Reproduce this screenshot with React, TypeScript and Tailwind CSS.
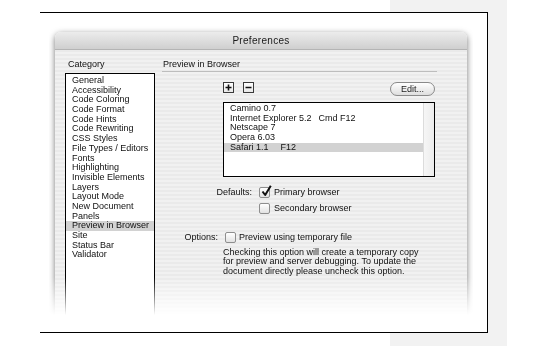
import React from 'react';

const categories = [
    'General',
    'Accessibility',
    'Code Coloring',
    'Code Format',
    'Code Hints',
    'Code Rewriting',
    'CSS Styles',
    'File Types / Editors',
    'Fonts',
    'Highlighting',
    'Invisible Elements',
    'Layers',
    'Layout Mode',
    'New Document',
    'Panels',
    'Preview in Browser',
    'Site',
    'Status Bar',
    'Validator',
];

const browsers = [
    { name: 'Camino 0.7' },
    { name: 'Internet Explorer 5.2', key: 'Cmd F12', gap: 'ml-[7px]' },
    { name: 'Netscape 7' },
    { name: 'Opera 6.03' },
    { name: 'Safari 1.1', key: 'F12', gap: 'ml-[12px]', selected: true },
];

const Checkbox: React.FC<{ checked?: boolean }> = ({ checked }) => (
    <span className="relative block w-[11px] h-[11px] shrink-0 rounded-[2px] border border-[#8e8e8e] bg-[linear-gradient(to_bottom,#ffffff,#e2e2e2)]">
        {checked && (
            <svg className="absolute -top-[3px] left-[1px]" width="11" height="12" viewBox="0 0 11 12">
                <path d="M1.5 6.5 L4.2 10 L9.8 0.8" stroke="#111" strokeWidth="2" fill="none" strokeLinejoin="round" />
            </svg>
        )}
    </span>
);

const SmallButton: React.FC<{ sign: '+' | '-' }> = ({ sign }) => (
    <span className="flex items-center justify-center w-[11px] h-[11px] border border-[#3a3a3a] bg-[linear-gradient(to_bottom,#ffffff,#e8e8e8)]">
        <svg width="7" height="7" viewBox="0 0 7 7">
            <path d="M0.5 3.5 H6.5" stroke="#111" strokeWidth="1.6" />
            {sign === '+' && <path d="M3.5 0.5 V6.5" stroke="#111" strokeWidth="1.6" />}
        </svg>
    </span>
);

export default function App() {
    return (
        <div className="w-[550px] h-[346px] overflow-hidden bg-[linear-gradient(to_right,#ffffff_390px,#f2f2f2_390px,#f2f2f2_507px,#ffffff_507px)] font-['Liberation_Sans',Arial,sans-serif] text-[#111] pt-[12px]">
            {/* Frame */}
            <div className="ml-[40px] w-[448px] h-[321px] border-t border-r border-b border-black bg-white">
                {/* Dialog, fading out at the bottom */}
                <div className="ml-[9px] mt-[13px] w-[424px] h-[292px] px-[6px] pt-[6px] [mask-image:linear-gradient(to_bottom,#000_86%,transparent_99%)]">
                    <div className="h-full flex flex-col rounded-t-[6px] overflow-hidden shadow-[0_2px_6px_rgba(0,0,0,0.55)] bg-[repeating-linear-gradient(to_bottom,#f1f1f1_0px,#f1f1f1_2px,#eaeaea_2px,#eaeaea_4px)]">
                        {/* Title bar */}
                        <div className="h-[18px] shrink-0 flex items-center justify-center border-b border-[#b4b4b4] bg-[linear-gradient(to_bottom,#ececec,#cfcfcf)] text-[10px] tracking-[0.3px] text-[#1a1a1a]">
                            Preferences
                        </div>

                        {/* Body */}
                        <div className="flex-1 flex gap-[7px] pl-[10px] pt-[9px] text-[9px] leading-[9.7px]">
                            {/* Category column */}
                            <div className="w-[90px] flex flex-col">
                                <div className="pl-[3px] h-[10px] leading-[10px]">Category</div>
                                <div className="mt-[4px] flex-1 border border-black bg-white pt-[2px]">
                                    {categories.map(c => (
                                        <div
                                            key={c}
                                            className={`pl-[6px] h-[9.7px] whitespace-nowrap ${c === 'Preview in Browser' ? 'bg-[#d2d2d2]' : ''}`}
                                        >
                                            {c}
                                        </div>
                                    ))}
                                </div>
                            </div>

                            {/* Preview in Browser panel */}
                            <div className="w-[275px] flex flex-col">
                                <div className="pl-[1px] h-[13px] leading-[10px] border-b border-[#bdbdbd]">Preview in Browser</div>

                                <div className="pl-[61px] mt-[10px] flex items-start justify-between">
                                    <div className="flex gap-[9px]">
                                        <SmallButton sign="+" />
                                        <SmallButton sign="-" />
                                    </div>
                                    <button className="mr-[2px] w-[45px] h-[14px] rounded-full border border-[#8a8a8a] bg-[linear-gradient(to_bottom,#ffffff,#dedede)] text-[9px] leading-[12px] text-[#222]">
                                        Edit...
                                    </button>
                                </div>

                                <div className="ml-[61px] mr-[2px] mt-[6px] h-[75px] border border-black bg-white flex">
                                    <div className="flex-1 pt-[1px]">
                                        {browsers.map(b => (
                                            <div
                                                key={b.name}
                                                className={`pl-[6px] h-[9.7px] whitespace-nowrap ${b.selected ? 'bg-[#d2d2d2]' : ''}`}
                                            >
                                                {b.name}
                                                {b.key && <span className={b.gap}>{b.key}</span>}
                                            </div>
                                        ))}
                                    </div>
                                    <div className="w-[11px] border-l border-[#dcdcdc] bg-[linear-gradient(to_right,#f6f6f6,#ececec)]" />
                                </div>

                                <div className="mt-[10px] flex items-center">
                                    <span className="w-[90px] text-right leading-[11px]">Defaults:</span>
                                    <span className="ml-[7px]"><Checkbox checked /></span>
                                    <span className="ml-[4px] leading-[11px]">Primary browser</span>
                                </div>
                                <div className="mt-[5px] flex items-center pl-[97px]">
                                    <Checkbox />
                                    <span className="ml-[4px] leading-[11px]">Secondary browser</span>
                                </div>

                                <div className="mt-[18px] flex items-center">
                                    <span className="w-[56px] text-right leading-[11px]">Options:</span>
                                    <span className="ml-[7px]"><Checkbox /></span>
                                    <span className="ml-[3px] leading-[11px]">Preview using temporary file</span>
                                </div>

                                <p className="pl-[61px] mt-[5px] leading-[9.3px]">
                                    Checking this option will create a temporary copy
                                    <br />
                                    for preview and server debugging. To update the
                                    <br />
                                    document directly please uncheck this option.
                                </p>
                            </div>
                        </div>
                    </div>
                </div>
            </div>
        </div>
    );
}
